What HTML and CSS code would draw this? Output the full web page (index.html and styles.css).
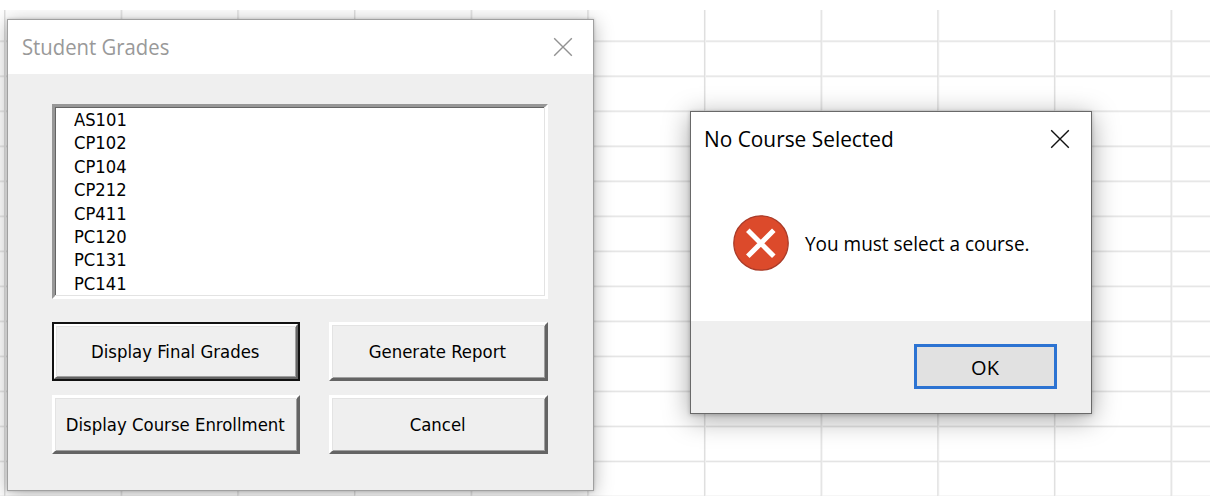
FILE: index.html
```html
<!DOCTYPE html>
<html lang="en">
<head>
<meta charset="utf-8">
<title>Student Grades</title>
<link rel="stylesheet" href="styles.css">
</head>
<body>
<main class="sheet">
  <section class="window form">
    <header class="titlebar form-title">
      <h1 class="title"><span class="t-form">Student Grades</span></h1>
      <svg class="close" viewBox="0 0 20 20"><path d="M1.2 1.2 18.8 18.8M18.8 1.2 1.2 18.8"/></svg>
    </header>
    <div class="form-body">
      <ul class="listbox">
        <li>AS101</li><li>CP102</li><li>CP104</li><li>CP212</li><li>CP411</li><li>PC120</li><li>PC131</li><li>PC141</li>
      </ul>
      <div class="buttons">
        <button class="btn default"><span class="label">Display Final Grades</span></button>
        <button class="btn"><span class="label">Generate Report</span></button>
        <button class="btn"><span class="label">Display Course Enrollment</span></button>
        <button class="btn"><span class="label">Cancel</span></button>
      </div>
    </div>
  </section>
  <section class="window message">
    <header class="titlebar message-title">
      <h2 class="title"><span class="t-message">No Course Selected</span></h2>
      <svg class="close" viewBox="0 0 20 20"><path d="M1.2 1.2 18.8 18.8M18.8 1.2 1.2 18.8"/></svg>
    </header>
    <div class="message-body">
      <svg class="error" viewBox="0 0 56 56"><circle cx="28" cy="28" r="27.2"/><path d="M14.8 15.3 40.8 41.3M40.8 15.3 14.8 41.3"/></svg>
      <p><span class="t-text">You must select a course.</span></p>
    </div>
    <footer class="message-footer"><button class="ok">OK</button></footer>
  </section>
</main>
</body>
</html>
```
FILE: styles.css
```css
* { box-sizing: border-box; }
body { margin: 0; padding-top: 10px; height: 496px; overflow: hidden; background: #fff; }
h1, h2, p, ul { margin: 0; padding: 0; font-weight: normal; }
button { padding: 0; color: #000; }

.sheet {
  position: relative;
  width: 1210px;
  height: 486px;
  overflow: hidden;
  background-image:
    linear-gradient(to right, #dedede 1px, #efefef 1px, #efefef 2px, transparent 2px),
    linear-gradient(to bottom, #dedede 1px, #f2f2f2 1px, #f2f2f2 2px, transparent 2px);
  background-size: 116.67px 100%, 100% 35.03px;
  background-position: 4px 0, 0 -4.5px;
}

.window { position: absolute; display: flex; flex-direction: column; background: #fff; }
.form { left: 7px; top: 9px; width: 587px; height: 472px; border: 1px solid #a0a0a0; box-shadow: 0 3px 18px rgba(0,0,0,.3), 0 0 3px rgba(0,0,0,.2); }
.message { left: 690px; top: 101px; width: 402px; height: 303px; border: 1px solid #696969; box-shadow: 0 5px 25px rgba(0,0,0,.36), 0 1px 4px rgba(0,0,0,.22); }

.titlebar { display: flex; align-items: center; justify-content: space-between; flex: none; }
.form-title { height: 54px; padding: 0 20px 0 14px; color: #999; }
.message-title { height: 54px; padding: 0 21px 0 13px; }
.title { font: 22px/30px "Open Sans", sans-serif; white-space: nowrap; }
.close { width: 20px; height: 20px; fill: none; stroke: #111; stroke-width: 1.4; }
.form-title .close { stroke: #929292; }
span { display: inline-block; white-space: nowrap; }
.t-form, .t-message, .t-text { transform-origin: 0 50%; }
.t-form { transform: translateY(-1px) scaleX(.922); }
.t-message { transform: translateY(-1px) scaleX(.948); }
.t-text { transform: translateY(1px) scaleX(.949); }
.label { transform: translate(-1px, 0) scaleX(1.05); }

.form-body { flex: 1; padding: 30px 45px 0 44px; background: #efefef; }
.listbox {
  height: 195px;
  padding: 2px 0 0 19px;
  list-style: none;
  background: #fff;
  border: solid;
  border-width: 3px;
  border-color: #979797 #fff #fff #979797;
  box-shadow: inset -1px -1px #e3e3e3, inset 1px 1px #646464;
  font: 17.5px/23.4px "DejaVu Sans Condensed", "DejaVu Sans", sans-serif;
  overflow: hidden;
}
.listbox li { height: 23.4px; transform: scaleX(1.04); transform-origin: 0 50%; }
.buttons { display: grid; grid-template-columns: 248px 219px; grid-template-rows: 59px 59px; gap: 14px 29px; margin-top: 23px; }
.btn {
  font: 17.5px/24px "DejaVu Sans Condensed", "DejaVu Sans", sans-serif;
  background: #efefef;
  border: solid;
  border-width: 3px;
  border-color: #fff #646464 #646464 #fff;
  box-shadow: inset 1px 1px #e3e3e3, inset -1px -1px #a0a0a0;
}
.default { outline: 2px solid #111; outline-offset: -2px; border-width: 4px; }

.message-body { display: flex; align-items: center; flex: 1; padding: 0 0 1px 42px; }
.message-body p { font: 20px/28px "Open Sans", sans-serif; margin-left: 16px; }
.error { width: 56px; height: 56px; flex: none; }
.error circle { fill: #dc4a2b; stroke: #a93b28; stroke-width: 1.3; }
.error path { stroke: #fff; stroke-width: 5; }
.message-footer { display: flex; justify-content: flex-end; flex: none; height: 92px; padding: 23px 34px 0 0; background: #efefef; }
.ok { width: 143px; height: 45px; padding: 2px 1px 0 0; border: 3px solid #2c73d2; background: #e1e1e1; font: 20px/28px "Open Sans", sans-serif; }
```
